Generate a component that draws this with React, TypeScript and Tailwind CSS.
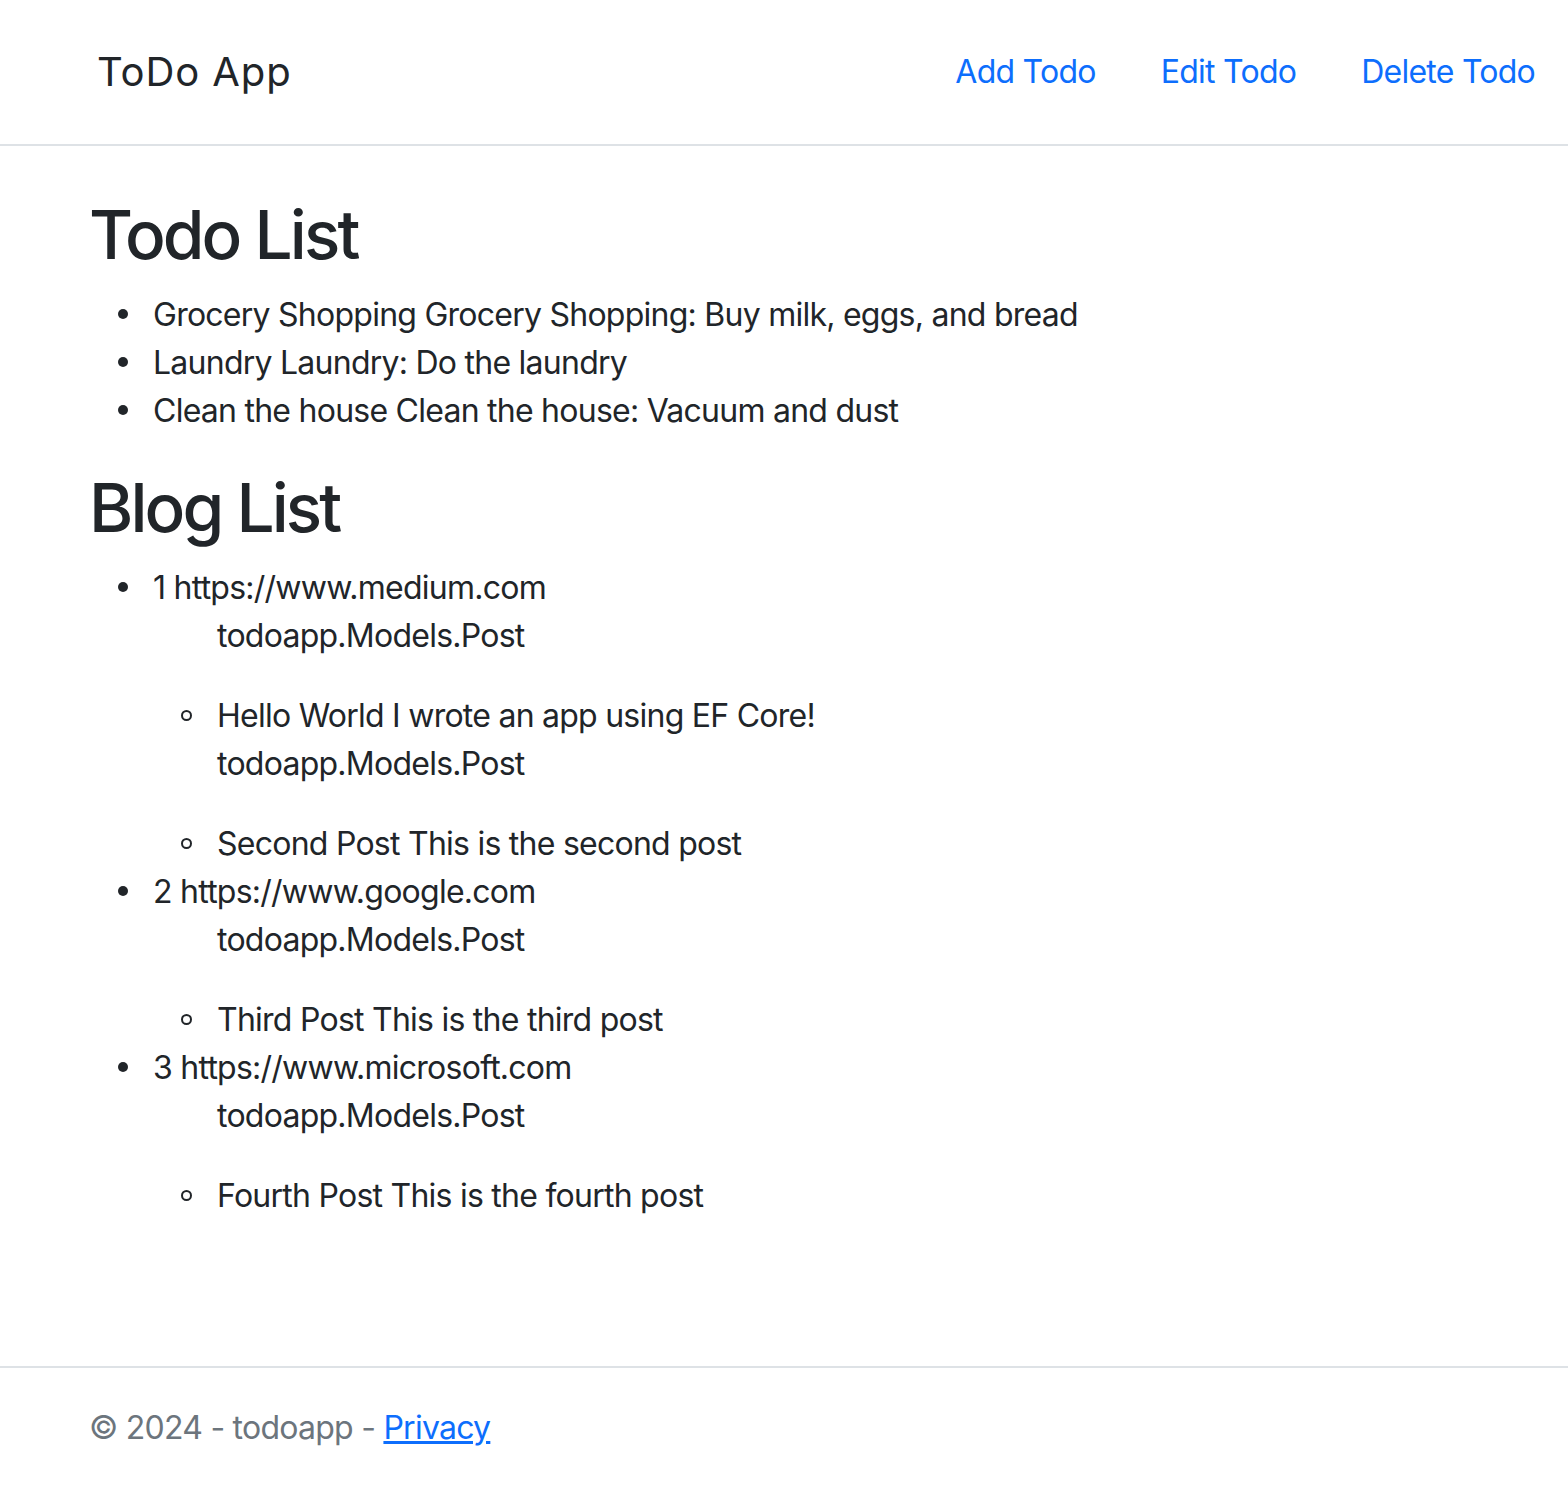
import React from "react";

const todos = [
  "Grocery Shopping Grocery Shopping: Buy milk, eggs, and bread",
  "Laundry Laundry: Do the laundry",
  "Clean the house Clean the house: Vacuum and dust",
];

const blogs = [
  {
    id: 1,
    url: "https://www.medium.com",
    posts: ["Hello World I wrote an app using EF Core!", "Second Post This is the second post"],
  },
  { id: 2, url: "https://www.google.com", posts: ["Third Post This is the third post"] },
  { id: 3, url: "https://www.microsoft.com", posts: ["Fourth Post This is the fourth post"] },
];

// hanging bullets, so they sit where the reference browser draws them
const Disc = () => (
  <span className="inline-block w-[10px] h-[10px] rounded-full bg-[#212529] -ml-[35px] mr-[25px] align-[7px]" />
);
const Circle = () => (
  <span className="inline-block w-[11px] h-[11px] rounded-full border-2 border-[#212529] -ml-[36px] mr-[25px] align-[6px]" />
);

const App = () => {
  return (
    <div
      className="min-h-[1488px] flex flex-col bg-white text-[#212529] text-[32px] leading-[48px] tracking-[-0.75px]"
      style={{ fontFamily: "Inter, 'Noto Sans', sans-serif" }}
    >
      {/* Navbar */}
      <header className="h-[146px] border-b-2 border-[#dee2e6] flex items-center justify-between pl-[97px] pr-[33px]">
        <a className="text-[40px] leading-[60px] tracking-[0.9px] text-[#212529]">ToDo App</a>
        <nav className="flex gap-[65px] text-[#0d6efd]">
          <a>Add Todo</a>
          <a>Edit Todo</a>
          <a>Delete Todo</a>
        </nav>
      </header>

      {/* Main */}
      <main className="pt-[48px] px-[89px]">
        <h1 className="text-[67.5px] leading-[81px] font-medium tracking-[-2.9px] mb-[16px]">Todo List</h1>
        <ul className="list-none pl-[64px] mb-[32px]">
          {todos.map((t) => (
            <li key={t}>
              <Disc />
              {t}
            </li>
          ))}
        </ul>

        <h1 className="text-[67.5px] leading-[81px] font-medium tracking-[-2.9px] mb-[16px]">Blog List</h1>
        <ul className="list-none pl-[64px]">
          {blogs.map((b) => (
            <li key={b.id}>
              <Disc />
              {b.id} {b.url}
              <ul className="list-none pl-[64px]">
                {b.posts.map((p) => (
                  <React.Fragment key={p}>
                    <p className="mb-[32px]">todoapp.Models.Post</p>
                    <li>
                      <Circle />
                      {p}
                    </li>
                  </React.Fragment>
                ))}
              </ul>
            </li>
          ))}
        </ul>
      </main>

      {/* Footer */}
      <footer className="mt-auto h-[122px] border-t-2 border-[#dee2e6] px-[89px] leading-[120px] text-[#6c757d]">
        © 2024 - todoapp - <a className="text-[#0d6efd] underline">Privacy</a>
      </footer>
    </div>
  );
};

export default App;
